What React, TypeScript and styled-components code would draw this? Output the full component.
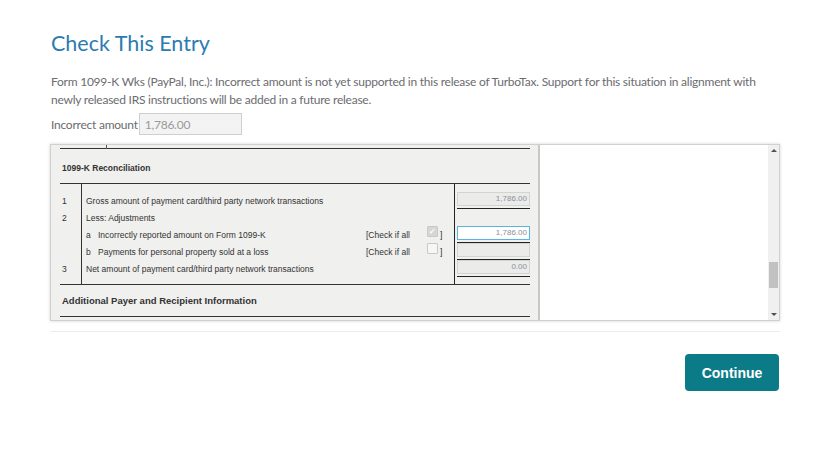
import React from "react";
import styled, { createGlobalStyle } from "styled-components";

const Global = createGlobalStyle`
  html, body { margin: 0; padding: 0; background: #fff; }
  body { font-family: Lato, "Open Sans", sans-serif; }
`;

const Page = styled.div`
  width: 837px;
  height: 475px;
  box-sizing: border-box;
  padding: 28px 57px 0 51px;
`;

const Title = styled.h1`
  margin: 0;
  font-family: Lato, sans-serif;
  font-weight: 400;
  font-size: 21.5px;
  line-height: 30px;
  color: #2b7bb1;
`;

const Message = styled.p`
  margin: 15px 0 0;
  font-size: 12px;
  letter-spacing: -0.24px;
  line-height: 18px;
  color: #6b6c70;
`;

const AmountRow = styled.div`
  display: flex;
  align-items: center;
  margin-top: 4px;
  font-size: 12px;
  letter-spacing: -0.24px;
  color: #6b6c70;
`;

const AmountInput = styled.div`
  width: 103px;
  height: 22px;
  box-sizing: border-box;
  margin-left: 1px;
  padding: 2px 5px;
  border: 1px solid #cfcfcf;
  background: #f3f3f3;
  color: #9a9a9a;
  font-size: 12px;
  line-height: 17px;
`;

const Frame = styled.div`
  display: flex;
  margin: 9px 0 0 -1px;
  height: 175px;
  border: 1px solid #d0d0d0;
  box-shadow: 0 0 3px rgba(0, 0, 0, 0.18);
  background: #fff;
`;

const FormPane = styled.div`
  width: 470px;
  padding: 0 8px 0 9px;
  background: #f0f0ee;
  border-right: 2px solid #c8c8c6;
  font-family: "Liberation Sans", Arial, sans-serif;
  font-size: 8.5px;
  color: #333;
  overflow: hidden;
`;

const TopRule = styled.div`
  position: relative;
  margin-top: 3px;
  border-top: 1px solid #333;
  &::before {
    content: "";
    position: absolute;
    left: 46px;
    top: -5px;
    width: 1px;
    height: 5px;
    background: #555;
  }
`;

const SectionHead = styled.div<{ $size?: number; $h: number; $pt?: number }>`
  height: ${(p) => p.$h}px;
  box-sizing: border-box;
  padding-top: ${(p) => p.$pt ?? 0}px;
  display: flex;
  align-items: center;
  padding-left: 2px;
  font-weight: bold;
  font-size: ${(p) => p.$size ?? 8.5}px;
  color: #333;
  border-bottom: 1px solid #333;
`;

const Table = styled.div`
  padding: 8px 0 7px;
  border-bottom: 1px solid #333;
`;

const Row = styled.div`
  display: flex;
  height: 17px;
`;

const Num = styled.div`
  width: 19px;
  padding: 8px 0 7px 2px;
  margin: -8px 0 -7px;
  border-right: 1px solid #333;
  display: flex;
  align-items: center;
`;

const Label = styled.div`
  flex: 1;
  display: flex;
  align-items: center;
  padding-left: 4px;
  white-space: nowrap;
`;

const Letter = styled.span`
  width: 12px;
`;

const CheckArea = styled.div`
  width: 88px;
  display: flex;
  align-items: center;
  white-space: nowrap;
`;

const Box = styled.span<{ $checked?: boolean }>`
  display: inline-block;
  width: 9px;
  height: 9px;
  margin: -6px 2px 0 17px;
  border: 1px solid #c9c9c9;
  border-radius: 1px;
  background: ${(p) => (p.$checked ? "#d6d6d6" : "#f6f6f6")};
  color: #fff;
  font-size: 8px;
  font-weight: bold;
  line-height: 9px;
  text-align: center;
`;

const AmountCol = styled.div`
  width: 73px;
  padding: 8px 0 7px 2px;
  margin: -8px 0 -7px;
  border-left: 1px solid #222;
  display: flex;
  flex-direction: column;
`;

const Field = styled.div<{ $active?: boolean }>`
  width: 73px;
  height: 14px;
  box-sizing: border-box;
  border: 1px solid ${(p) => (p.$active ? "#5ab4e0" : "#d3d3d1")};
  background: ${(p) => (p.$active ? "#fff" : "#ebebe9")};
  box-shadow: 0 2px 0 0 #f0f0ee, 0 3px 0 0 #222;
  color: #8a8f9c;
  font-size: 8px;
  line-height: 12px;
  text-align: right;
  padding-right: 2px;
`;

const Blank = styled.div`
  flex: 1;
  background: #fff;
`;

const Scrollbar = styled.div`
  width: 11px;
  background: #f0f0f0;
  display: flex;
  flex-direction: column;
  align-items: center;
  justify-content: space-between;
  padding: 4px 0 4px;
  box-sizing: border-box;
`;

const Arrow = styled.div<{ $down?: boolean }>`
  width: 0;
  height: 0;
  border-left: 3px solid transparent;
  border-right: 3px solid transparent;
  ${(p) =>
    p.$down ? "border-top: 3px solid #505050;" : "border-bottom: 3px solid #505050;"}
`;

const Track = styled.div`
  flex: 1;
  width: 100%;
  display: flex;
  flex-direction: column;
  justify-content: flex-end;
  padding-bottom: 25px;
`;

const Thumb = styled.div`
  width: 9px;
  margin-left: 1px;
  height: 26px;
  background: #c1c1c1;
`;

const Divider = styled.div`
  margin: 10px 0 0 -1px;
  border-top: 1px solid #ececec;
`;

const Footer = styled.div`
  display: flex;
  justify-content: flex-end;
  margin-top: 22px;
`;

const Button = styled.button`
  width: 94px;
  height: 37px;
  margin-right: 1px;
  border: none;
  border-radius: 4px;
  background: #0c7b88;
  color: #fff;
  font-family: "Liberation Sans", Arial, sans-serif;
  font-weight: bold;
  font-size: 14px;
  cursor: pointer;
`;

type Line = {
  num?: string;
  letter?: string;
  text: string;
  check?: "on" | "off";
  amount?: { value: string; active?: boolean } | null;
};

const lines: Line[] = [
  { num: "1", text: "Gross amount of payment card/third party network transactions", amount: { value: "1,786.00" } },
  { num: "2", text: "Less: Adjustments", amount: null },
  { letter: "a", text: "Incorrectly reported amount on Form 1099-K", check: "on", amount: { value: "1,786.00", active: true } },
  { letter: "b", text: "Payments for personal property sold at a loss", check: "off", amount: { value: "" } },
  { num: "3", text: "Net amount of payment card/third party network transactions", amount: { value: "0.00" } },
];

export default function App() {
  return (
    <>
      <Global />
      <Page>
        <Title>Check This Entry</Title>
        <Message>
          Form 1099-K Wks (PayPal, Inc.): Incorrect amount is not yet supported in this release of TurboTax. Support for this situation in alignment with newly released IRS instructions will be added in a future release.
        </Message>
        <AmountRow>
          Incorrect amount
          <AmountInput>1,786.00</AmountInput>
        </AmountRow>
        <Frame>
          <FormPane>
            <TopRule />
            <SectionHead $h={35} $pt={4}>1099-K Reconciliation</SectionHead>
            <Table>
              {lines.map((l, i) => (
                <Row key={i}>
                  <Num>{l.num}</Num>
                  <Label>
                    {l.letter && <Letter>{l.letter}</Letter>}
                    {l.text}
                  </Label>
                  <CheckArea>
                    {l.check && (
                      <>
                        [Check if all
                        <Box $checked={l.check === "on"}>{l.check === "on" ? "✓" : ""}</Box>]
                      </>
                    )}
                  </CheckArea>
                  <AmountCol>
                    {l.amount && <Field $active={l.amount.active}>{l.amount.value}</Field>}
                  </AmountCol>
                </Row>
              ))}
            </Table>
            <SectionHead $size={9.5} $h={32}>Additional Payer and Recipient Information</SectionHead>
          </FormPane>
          <Blank />
          <Scrollbar>
            <Arrow />
            <Track>
              <Thumb />
            </Track>
            <Arrow $down />
          </Scrollbar>
        </Frame>
        <Divider />
        <Footer>
          <Button>Continue</Button>
        </Footer>
      </Page>
    </>
  );
}
